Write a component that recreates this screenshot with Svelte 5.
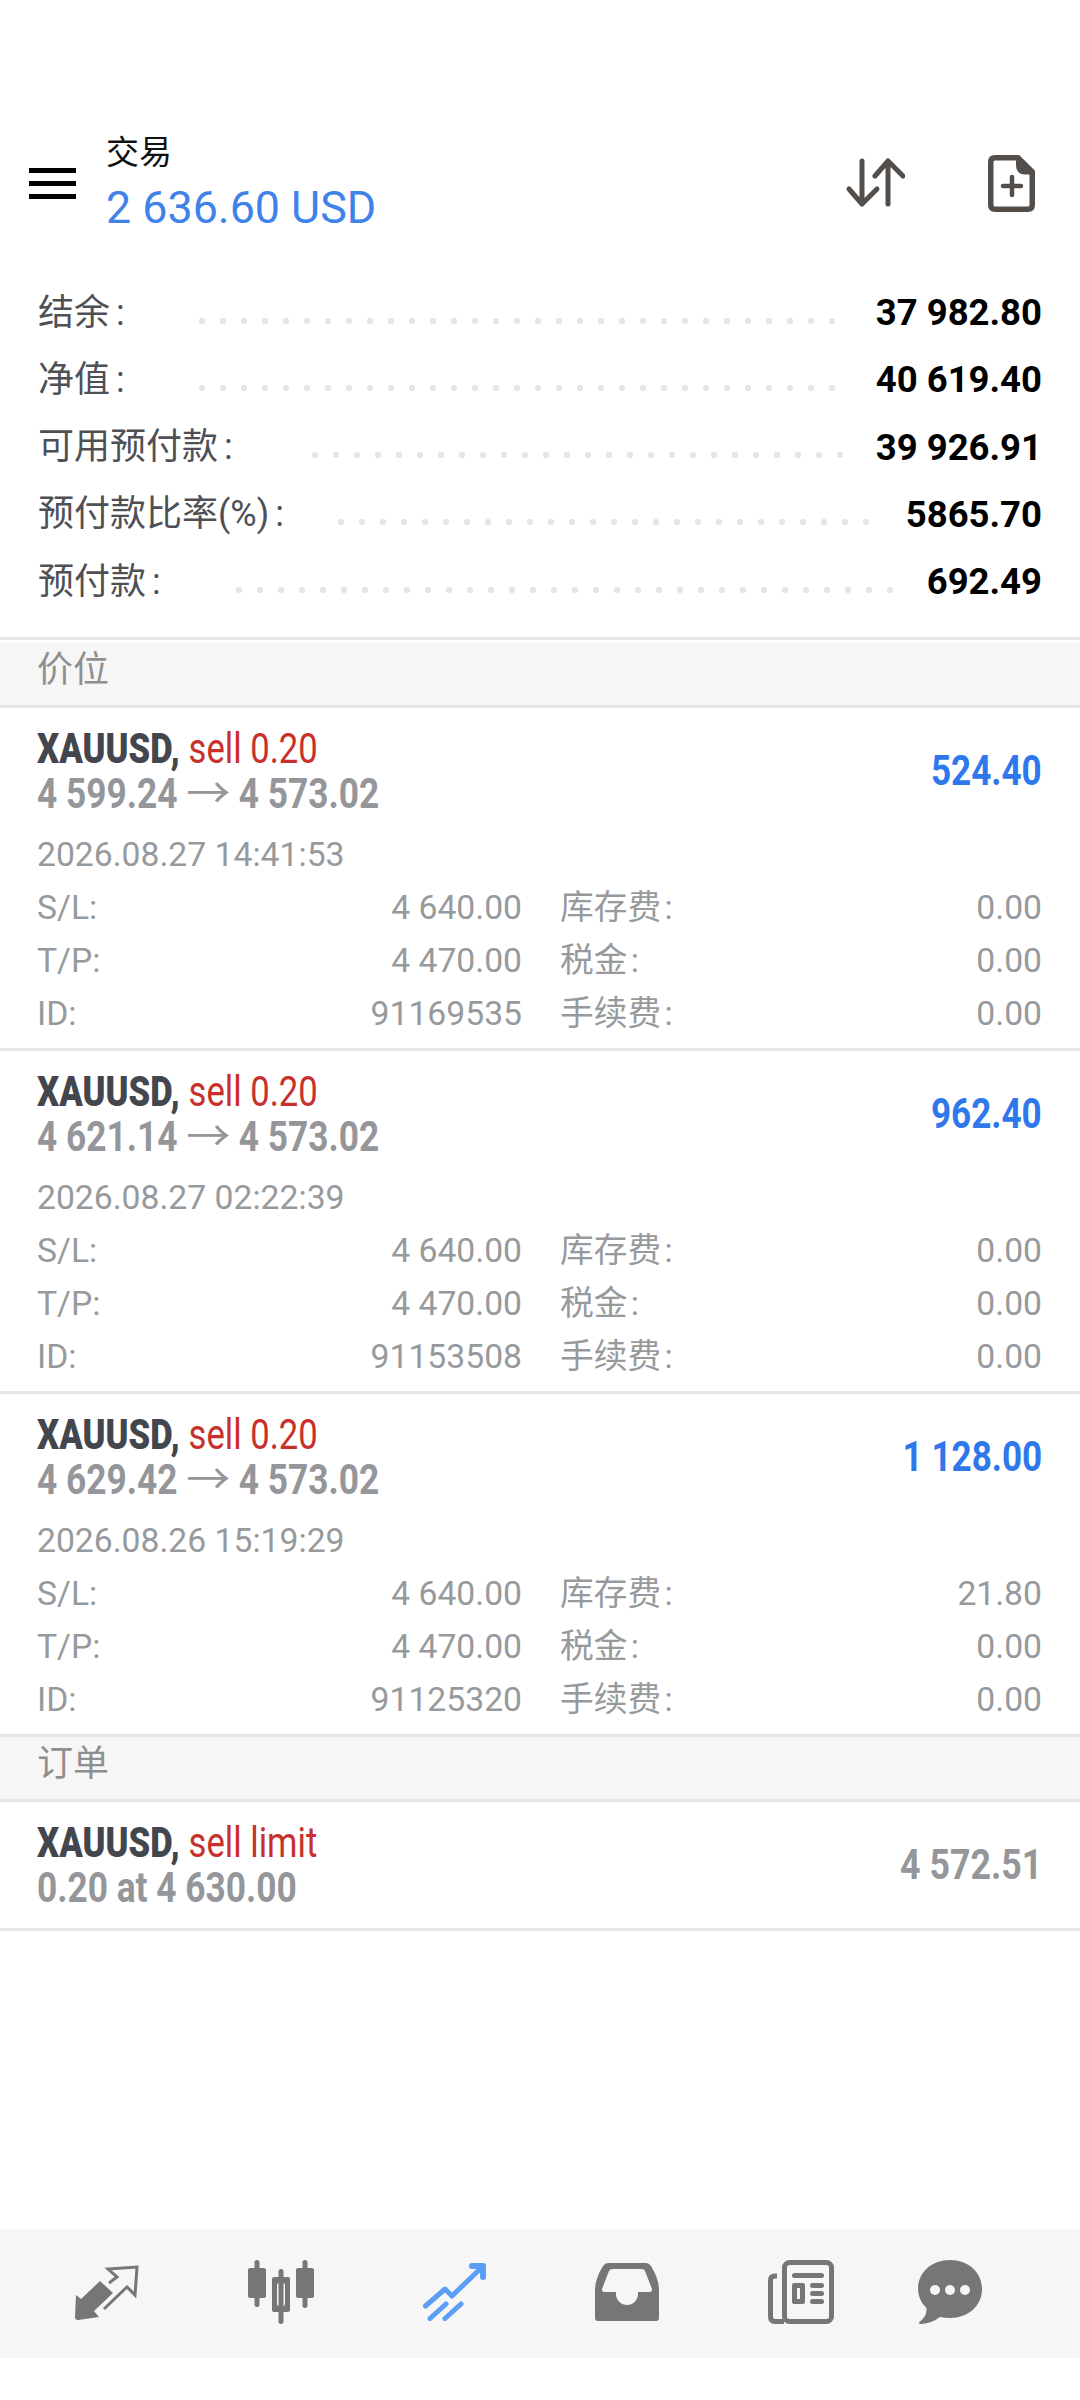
<script>
	const summary = [
		{ label: '结余 :', value: '37 982.80', lead: 74 },
		{ label: '净值 :', value: '40 619.40', lead: 74 },
		{ label: '可用预付款 :', value: '39 926.91', lead: 79 },
		{ label: '预付款比率(%) :', value: '5865.70', lead: 54 },
		{ label: '预付款 :', value: '692.49', lead: 75 }
	];

	const positions = [
		{ from: '4 599.24', profit: '524.40', time: '2026.08.27 14:41:53', id: '91169535', swap: '0.00' },
		{ from: '4 621.14', profit: '962.40', time: '2026.08.27 02:22:39', id: '91153508', swap: '0.00' },
		{ from: '4 629.42', profit: '1 128.00', time: '2026.08.26 15:19:29', id: '91125320', swap: '21.80' }
	];
</script>

<div class="page">
	<header class="top">
		<div class="burger"><span></span><span></span><span></span></div>
		<div class="account">
			<div class="account-title">交易</div>
			<div class="account-value">2 636.60 USD</div>
		</div>
		<svg class="sort" width="60" height="52" viewBox="0 0 60 52" fill="none" stroke="#544e4b" stroke-width="5" stroke-linecap="round" stroke-linejoin="round">
			<path d="M17 4V47M4 32L17 47L32 32" />
			<path d="M43 47V4M30 19L43 4L58 19" />
		</svg>
		<svg class="new-file" width="47" height="57" viewBox="0 0 47 57" fill="none" stroke="#544e4b">
			<path stroke-width="5.5" d="M7 2.750H30L44.250 17V50Q44.250 54.250 40 54.250H7Q2.750 54.250 2.750 50V7Q2.750 2.750 7 2.750Z" />
			<path fill="#544e4b" stroke="none" d="M28 3L45 19.500H37Q28 19.500 28 10Z" />
			<path stroke-width="4.500" stroke-linecap="round" d="M24 22V40M15 31H33" />
		</svg>
	</header>

	<section class="summary">
		{#each summary as row}
			<div class="summary-row">
				<span class="summary-label">{row.label}</span>
				<span class="leader" style:margin-left="{row.lead}px"></span>
				<span class="summary-value">{row.value}</span>
			</div>
		{/each}
	</section>

	<div class="section-title">价位</div>
	{#each positions as pos}
		<article class="trade">
			<div class="trade-head">
				<div>
					<div class="line-one"><span class="cond"><b>XAUUSD,</b> <i>sell 0.20</i></span></div>
					<div class="line-two"><span class="cond">{pos.from} <em>→</em> 4 573.02</span></div>
				</div>
				<div class="profit"><span class="cond">{pos.profit}</span></div>
			</div>
			<div class="time">{pos.time}</div>
			<div class="details">
				<div class="cell"><span>S/L:</span><span>4 640.00</span></div>
				<div class="cell"><span>库存费&#8202;:</span><span>{pos.swap}</span></div>
				<div class="cell"><span>T/P:</span><span>4 470.00</span></div>
				<div class="cell"><span>税金&#8202;:</span><span>0.00</span></div>
				<div class="cell"><span>ID:</span><span>{pos.id}</span></div>
				<div class="cell"><span>手续费&#8202;:</span><span>0.00</span></div>
			</div>
		</article>
	{/each}

	<div class="section-title second">订单</div>
	<article class="trade order">
		<div class="trade-head">
			<div>
				<div class="line-one"><span class="cond"><b>XAUUSD,</b> <i>sell limit</i></span></div>
				<div class="line-two"><span class="cond">0.20 at 4 630.00</span></div>
			</div>
			<div class="profit pending"><span class="cond">4 572.51</span></div>
		</div>
	</article>

	<nav class="tabs">
		<svg width="64" height="55" viewBox="0 0 64 55">
			<path fill="#767676" d="M1 30L6 34L25 16L38 28L19 46L24 52L3 55Q0 55 0 52Z" />
			<path fill="none" stroke="#767676" stroke-width="3" d="M29 44L52 22L60 30L62 2L33 4L42 12L34 18" />
		</svg>
		<svg width="66" height="64" viewBox="0 0 66 64" fill="#767676">
			<rect x="6.500" y="0" width="5" height="47" rx="2.500" />
			<rect x="0" y="8" width="18" height="30" rx="2" />
			<rect x="54.500" y="0" width="5" height="48" rx="2.500" />
			<rect x="48" y="8" width="18" height="30" rx="2" />
			<rect x="30.500" y="9" width="5" height="55" rx="2.500" />
			<path fill-rule="evenodd" d="M26 17H40Q42 17 42 19V50Q42 52 40 52H26Q24 52 24 50V19Q24 17 26 17ZM31 23Q29 23 29 25V44Q29 46 31 46H35Q37 46 37 44V25Q37 23 35 23Z" />
		</svg>
		<svg width="63" height="58" viewBox="0 0 63 58" fill="none" stroke="#5b9ef5" stroke-linecap="round" stroke-linejoin="round">
			<path stroke-width="5" d="M2.500 43L22 26L29 33L57 6" />
			<path stroke-width="6" d="M49 3H60V14" />
			<path stroke-width="5" d="M7 55.500L23 41M22 55.500L38 41" />
		</svg>
		<svg width="64" height="58" viewBox="0 0 64 58" fill="#767676">
			<path fill-rule="evenodd" d="M13 0H51Q54 0 56 3Q64 16 64 27V55Q64 58 61 58H3Q0 58 0 55V27Q0 16 8 3Q10 0 13 0ZM18 6Q15 6 14 8L7 26Q7 29 9 29H21V31A11 11 0 0 0 43 31V29H55Q57 29 57 26L50 8Q49 6 47 6Z" />
		</svg>
		<svg width="66" height="64" viewBox="0 0 66 64" fill="none" stroke="#767676">
			<path stroke-width="5" d="M9 16H7Q2.500 16 2.500 20V56Q2.500 61.500 7 61.500H16" />
			<rect x="16.500" y="2.500" width="47" height="59" rx="5" stroke-width="5" />
			<g fill="#767676" stroke="none">
				<rect x="24" y="13" width="32" height="5" rx="2.500" />
				<path fill-rule="evenodd" d="M26 23H35Q37 23 37 25V42Q37 44 35 44H26Q24 44 24 42V25Q24 23 26 23ZM29 28V39H32V28Z" />
				<rect x="42" y="23" width="14" height="5" rx="2.500" />
				<rect x="42" y="31" width="14" height="5" rx="2.500" />
				<rect x="42" y="39" width="14" height="5" rx="2.500" />
			</g>
		</svg>
		<svg class="chat" width="64" height="64" viewBox="0 0 64 64">
			<path fill="#767676" d="M32 0C50 0 64 12 64 29C64 46 50 58 32 58Q27 58 22 57Q13 64 2 64Q0 63 1.500 62Q9 57 8.500 48Q0 40 0 29C0 12 14 0 32 0Z" />
			<g fill="#f6f6f6">
				<circle cx="17" cy="30" r="5" />
				<circle cx="32" cy="30" r="5" />
				<circle cx="47" cy="30" r="5" />
			</g>
		</svg>
	</nav>
</div>

<style>
	:global(body) {
		margin: 0;
		background: #fff;
	}

	.page {
		display: flex;
		flex-direction: column;
		min-height: 2400px;
		box-sizing: border-box;
		padding-top: 128px;
		padding-bottom: 42px;
		font-family: Roboto, 'Noto Sans CJK SC', sans-serif;
		overflow: hidden;
	}

	.top {
		display: flex;
		align-items: center;
		height: 110px;
		padding: 0 45px 0 29px;
	}

	.burger {
		display: flex;
		flex-direction: column;
		gap: 8px;
		width: 47px;
		margin-right: 30px;
	}

	.burger span {
		height: 5px;
		background: #000;
	}

	.account-title {
		font-size: 33px;
		line-height: 50px;
		color: #111;
	}

	.account-value {
		font-size: 44.800px;
		line-height: 60px;
		color: #3f82e8;
	}

	.sort {
		margin-left: auto;
	}

	.new-file {
		margin-left: 83px;
	}

	.summary {
		margin-top: 40px;
		margin-bottom: 3px;
		padding: 0 38px 23px 38px;
		border-bottom: 3px solid #e6e6e6;
	}

	.summary-row {
		display: flex;
		align-items: center;
		height: 67.250px;
	}

	.summary-label {
		margin-bottom: 6px;
		font-size: 36px;
		word-spacing: -3px;
		color: #4e5056;
	}

	.leader {
		flex: 1;
		height: 6px;
		margin: 18px 30px 0 74px;
		background-image: radial-gradient(circle at 3px 3px, #e6e6e6 3px, transparent 3.400px);
		background-size: 21px 6px;
		background-repeat: repeat-x;
	}

	.summary-value {
		margin-top: 2px;
		font-size: 36.500px;
		font-weight: 700;
		color: #000;
	}

	.section-title {
		height: 62px;
		padding-left: 37px;
		font-size: 36px;
		line-height: 54px;
		color: #8f8f8f;
		background: #f6f6f6;
		border-bottom: 3px solid #e6e6e6;
	}

	.trade {
		padding: 17.500px 38px 8.500px 37px;
		border-bottom: 3px solid #e6e6e6;
	}

	.trade.order {
		padding-bottom: 18.500px;
	}

	.trade-head {
		display: flex;
		justify-content: space-between;
		align-items: center;
	}

	.line-one,
	.line-two,
	.profit {
		font-size: 42px;
		line-height: 45px;
		font-weight: 700;
		white-space: nowrap;
	}

	.cond {
		display: inline-block;
		transform-origin: left center;
	}

	.line-one .cond {
		transform: scaleX(0.825);
	}

	.line-two .cond {
		transform: scaleX(0.84);
	}

	.profit .cond {
		transform: scaleX(0.835);
		transform-origin: right center;
	}

	.profit.pending .cond {
		transform: scaleX(0.85);
	}

	.line-one b {
		color: #44464d;
	}

	.line-one i {
		font-style: normal;
		font-weight: 400;
		color: #c8302b;
	}

	.line-two {
		color: #94969a;
	}

	.line-two em {
		display: inline-block;
		margin: 0 5px;
		font-style: normal;
		font-weight: 400;
		transform: scaleX(1.25);
	}

	.profit {
		color: #2f78eb;
	}

	.profit.pending {
		color: #94969a;
	}

	.time {
		margin-top: 12px;
		font-size: 33.700px;
		line-height: 53px;
		color: #979a9c;
	}

	.details {
		display: grid;
		grid-template-columns: 485px 1fr;
		column-gap: 38px;
		font-size: 33.700px;
		line-height: 53px;
		color: #979a9c;
	}

	.cell {
		display: flex;
		justify-content: space-between;
	}

	.tabs {
		display: flex;
		align-items: center;
		gap: 109px;
		height: 126px;
		margin-top: auto;
		padding: 0 0 3px 75px;
		background: #f6f6f6;
	}

	.chat {
		margin-left: -25px;
	}
</style>
